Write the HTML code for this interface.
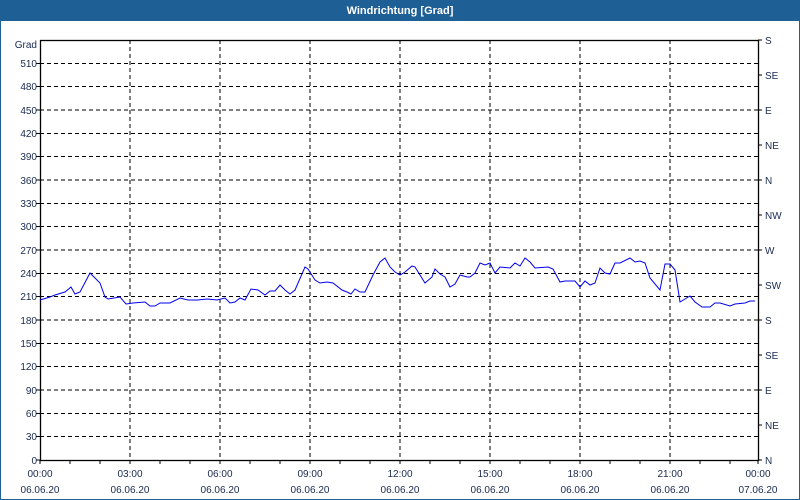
<!DOCTYPE html>
<html><head><meta charset="utf-8"><style>
html,body{margin:0;padding:0;background:#fff;width:800px;height:500px;overflow:hidden}
svg{display:block;font-family:"Liberation Sans",sans-serif}
</style></head><body>
<svg width="800" height="500" viewBox="0 0 800 500">
<rect x="0" y="0" width="800" height="500" fill="#1e5f96"/>
<rect x="1" y="21" width="798" height="478" fill="#fff"/>
<text x="400" y="14" fill="#fff" font-size="11" font-weight="bold" text-anchor="middle">Windrichtung [Grad]</text>
<g stroke="#000" stroke-width="1" stroke-dasharray="4,3" shape-rendering="crispEdges">
<line x1="40" x2="758" y1="63.3" y2="63.3"/><line x1="40" x2="758" y1="86.7" y2="86.7"/>
<line x1="40" x2="758" y1="110" y2="110"/><line x1="40" x2="758" y1="133.3" y2="133.3"/>
<line x1="40" x2="758" y1="156.7" y2="156.7"/><line x1="40" x2="758" y1="180" y2="180"/>
<line x1="40" x2="758" y1="203.3" y2="203.3"/><line x1="40" x2="758" y1="226.7" y2="226.7"/>
<line x1="40" x2="758" y1="250" y2="250"/><line x1="40" x2="758" y1="273.3" y2="273.3"/>
<line x1="40" x2="758" y1="296.7" y2="296.7"/><line x1="40" x2="758" y1="320" y2="320"/>
<line x1="40" x2="758" y1="343.3" y2="343.3"/><line x1="40" x2="758" y1="366.7" y2="366.7"/>
<line x1="40" x2="758" y1="390" y2="390"/><line x1="40" x2="758" y1="413.3" y2="413.3"/>
<line x1="40" x2="758" y1="436.7" y2="436.7"/>
<line y1="40" y2="460" x1="130" x2="130"/><line y1="40" y2="460" x1="220" x2="220"/>
<line y1="40" y2="460" x1="310" x2="310"/><line y1="40" y2="460" x1="400" x2="400"/>
<line y1="40" y2="460" x1="490" x2="490"/><line y1="40" y2="460" x1="580" x2="580"/>
<line y1="40" y2="460" x1="670" x2="670"/>
</g>
<rect x="40.5" y="40.5" width="718" height="420" fill="none" stroke="#000" stroke-width="1.3"/>
<g stroke="#000" shape-rendering="crispEdges">
<path d="M40 460v4M70 460v4M100 460v4M130 460v4M160 460v4M190 460v4M220 460v4M250 460v4M280 460v4M310 460v4M340 460v4M370 460v4M400 460v4M430 460v4M460 460v4M490 460v4M520 460v4M550 460v4M580 460v4M610 460v4M640 460v4M670 460v4M700 460v4M730 460v4M758 460v4"/>
<path d="M758 40h4M758 75h4M758 110h4M758 145h4M758 180h4M758 215h4M758 250h4M758 285h4M758 320h4M758 355h4M758 390h4M758 425h4M758 460h4"/>
<path d="M36 63.3h4M36 86.7h4M36 110h4M36 133.3h4M36 156.7h4M36 180h4M36 203.3h4M36 226.7h4M36 250h4M36 273.3h4M36 296.7h4M36 320h4M36 343.3h4M36 366.7h4M36 390h4M36 413.3h4M36 436.7h4M36 460h4"/>
</g>
<polyline fill="none" stroke="#0000ee" stroke-width="1" points="40,300 50,297 55,295 65,292 71,287 75,294 80,292 90,273 100,283 105,297 108,299 120,297 126,304 133,303 145,302 150,306 155,306 160,303 170,303 180,298 188,300 198,300 207,299 217,300 225,298 230,303 235,302 240,298 245,300 251,289 258,290 265,295 270,291 275,291 280,285 285,290 290,294 295,290 305,267 308,269 315,280 320,283 327,282 333,283 342,290 347,292 351,294 355,289 360,292 365,292 373,275 380,262 385,258 390,267 395,272 400,275 405,272 412,266 415,267 425,283 432,277 435,269 440,274 445,277 450,287 455,284 460,275 467,277 470,277 475,273 480,263 485,265 490,263 495,273 500,267 510,268 515,263 520,266 525,258 530,262 535,268 548,267 553,269 560,282 565,281 575,281 580,287 585,281 590,285 595,283 600,268 605,273 610,274 615,263 620,263 630,258 635,262 640,261 645,263 650,278 660,290 665,264 670,264 675,270 680,302 685,299 690,296 695,302 702,307 710,307 715,303 720,303 730,306 735,304 745,303 750,301 755,301"/>
<g font-size="10" fill="#1a2a50" text-anchor="end">
<text x="37" y="48">Grad</text>
<text x="37" y="67">510</text><text x="37" y="90">480</text><text x="37" y="114">450</text>
<text x="37" y="137">420</text><text x="37" y="160">390</text><text x="37" y="184">360</text>
<text x="37" y="207">330</text><text x="37" y="230">300</text><text x="37" y="254">270</text>
<text x="37" y="277">240</text><text x="37" y="300">210</text><text x="37" y="324">180</text>
<text x="37" y="347">150</text><text x="37" y="370">120</text><text x="37" y="394">90</text>
<text x="37" y="417">60</text><text x="37" y="440">30</text><text x="37" y="464">0</text>
</g>
<g font-size="10" fill="#1a2a50">
<text x="765" y="44">S</text><text x="765" y="79">SE</text><text x="765" y="114">E</text>
<text x="765" y="149">NE</text><text x="765" y="184">N</text><text x="765" y="219">NW</text>
<text x="765" y="254">W</text><text x="765" y="289">SW</text><text x="765" y="324">S</text>
<text x="765" y="359">SE</text><text x="765" y="394">E</text><text x="765" y="429">NE</text>
<text x="765" y="464">N</text>
</g>
<g font-size="10" fill="#1a2a50" text-anchor="middle">
<text x="40" y="477">00:00</text><text x="130" y="477">03:00</text><text x="220" y="477">06:00</text>
<text x="310" y="477">09:00</text><text x="400" y="477">12:00</text><text x="490" y="477">15:00</text>
<text x="580" y="477">18:00</text><text x="670" y="477">21:00</text><text x="758" y="477">00:00</text>
<text x="40" y="493">06.06.20</text><text x="130" y="493">06.06.20</text><text x="220" y="493">06.06.20</text>
<text x="310" y="493">06.06.20</text><text x="400" y="493">06.06.20</text><text x="490" y="493">06.06.20</text>
<text x="580" y="493">06.06.20</text><text x="670" y="493">06.06.20</text><text x="758" y="493">07.06.20</text>
</g>
</svg>
</body></html>
